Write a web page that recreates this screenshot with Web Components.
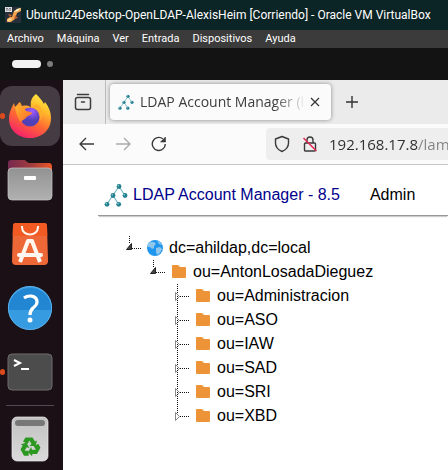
<!DOCTYPE html>
<html lang="es">
<head>
<meta charset="utf-8">
<meta name="viewport" content="width=device-width, initial-scale=1">
<title>Ubuntu24Desktop - Oracle VM VirtualBox</title>
<style>
html, body { margin: 0; height: 100%; }
body { background: #131313; overflow: hidden; font-family: "Open Sans", "Noto Sans", sans-serif; }
</style>
</head>
<body>
<vm-window></vm-window>
<script>
const define = (name, html, setup) => {
  const template = document.createElement('template');
  template.innerHTML = html;
  customElements.define(name, class extends HTMLElement {
    constructor() {
      super();
      this.attachShadow({ mode: 'open' }).append(template.content.cloneNode(true));
    }
    connectedCallback() { if (setup) setup(this, this.shadowRoot); }
  });
};

const lamLogo = size => `<svg width="${size}" height="${size}" viewBox="0 0 24 24" aria-hidden="true">
  <path d="M15 3.500L3 21M15 3.500L21 12.500M9 12.500L14.500 21" fill="none" stroke="#79b8c8" stroke-width="1.200"/>
  <g fill="#23808f"><circle cx="15" cy="3.500" r="2.400"/><circle cx="9" cy="12.500" r="2.400"/><circle cx="21" cy="12.500" r="2.400"/><circle cx="3" cy="21.300" r="2.400"/><circle cx="14.700" cy="21.300" r="2.400"/></g>
  <g fill="#8fd0d8"><circle cx="14.300" cy="2.800" r=".8"/><circle cx="8.300" cy="11.800" r=".8"/><circle cx="20.300" cy="11.800" r=".8"/><circle cx="2.300" cy="20.600" r=".8"/><circle cx="14" cy="20.600" r=".8"/></g>
</svg>`;

define('vm-titlebar', `<style>
:host { display: flex; align-items: center; gap: 5px; height: 30px; flex: none; padding-left: 5px; background: #0b2425; color: #fff; font: 12px Roboto, "Noto Sans", sans-serif; white-space: nowrap; overflow: hidden; }
svg { flex: none; }
</style>
<svg width="16" height="16" viewBox="0 0 16 16" aria-hidden="true">
  <rect width="16" height="16" fill="#27303a"/>
  <path d="M2 12L5 10L7 10L9 4L12 2L16 1V4L12 6L10 12L6 15L2 15Z" fill="#f4a451"/>
  <path d="M9 5L12 2L16 1L13 4Z" fill="#fff0c4"/><path d="M2 13L5 11L7 12L4 15Z" fill="#ffd690"/>
  <path d="M3 7L7 8L5 10ZM10 8L13 11L9 12Z" fill="#c95f2c"/>
  <rect width="7" height="5" fill="#ddd"/><path d="M1 1.500H3M4 1.500H6M1 3H6" stroke="#667" stroke-width=".8"/>
</svg>
<span><slot></slot></span>`);

define('vm-menubar', `<style>
:host { display: flex; align-items: center; gap: 13px; height: 18px; flex: none; padding-left: 7px; background: #3b3b3b; }
::slotted(button) { border: 0; margin: 0; padding: 0; background: none; color: #fff; font: 11px/18px Roboto, "Noto Sans", sans-serif; }
</style><slot></slot>`);

define('gnome-panel', `<style>
:host { display: flex; align-items: center; height: 32px; flex: none; padding-left: 12px; background: #131313; }
button { display: flex; align-items: center; gap: 6px; border: 0; padding: 0; background: none; }
.current { width: 29px; height: 8px; border-radius: 4px; background: #f2f2f2; }
.other { width: 6px; height: 6px; border-radius: 50%; background: #7d7d7d; }
</style><button aria-label="Actividades"><span class="current"></span><span class="other"></span></button>`);

define('dock-item', `<style>
:host { display: block; position: relative; }
button { display: grid; place-items: center; width: 60px; height: 60px; border: 0; padding: 0; border-radius: 12px; background: none; }
:host([active]) button { background: #453b42; }
:host([running])::before { content: ""; position: absolute; left: 0; top: 27px; width: 5px; height: 6px; border-radius: 3px; background: #dc4b1d; }
</style><button><slot></slot></button>`, (host, root) =>
  root.querySelector('button').setAttribute('aria-label', host.getAttribute('label')));

define('app-dock', `<style>
:host { display: flex; flex-direction: column; gap: 4px; flex: none; width: 63px; padding-top: 6px; box-sizing: border-box; background: #1c1017; overflow: hidden; }
hr { width: 48px; height: 1px; border: 0; margin: -1px 0 -1px 6px; background: #514950; flex: none; }
svg { display: block; }
</style>
<dock-item label="Firefox" active running>
<svg width="44" height="46" viewBox="0 0 44 46">
  <defs>
    <linearGradient id="f1" x1=".8" y1="0" x2=".3" y2="1"><stop offset="0" stop-color="#fff047"/><stop offset=".3" stop-color="#ffbb2c"/><stop offset=".6" stop-color="#ff6a32"/><stop offset="1" stop-color="#f5206c"/></linearGradient>
    <radialGradient id="f2" cx=".6" cy=".2"><stop offset="0" stop-color="#a45cff"/><stop offset="1" stop-color="#5140b8"/></radialGradient>
    <linearGradient id="f3" x1="0" y1="0" x2="1" y2="1"><stop offset="0" stop-color="#ffb52d"/><stop offset="1" stop-color="#ff642b"/></linearGradient>
  </defs>
  <path d="M28 1C31 4 34 7 36 11L37 9C41 14 43 19 43 25C43 37 34 45 22 45C10 45 1 37 1 26C1 19 4 14 6 10L7 14C9 12 10 10 12 9L14 13C18 12 21 13 23 14C22 8 24 4 28 1Z" fill="url(#f1)"/>
  <circle cx="22" cy="24" r="9.500" fill="url(#f2)"/>
  <path d="M7 14C12 11 16 14 18 18C21 19 24 19 24 20C23 23 19 22 18 25C16 27 13 27 13 30C10 25 8 21 7 14Z" fill="url(#f3)"/>
  <path d="M24 14C31 15 35 22 31 29C37 21 34 14 29 11Z" fill="#ffb02b"/>
</svg></dock-item>
<dock-item label="Archivos">
<svg width="46" height="42" viewBox="0 0 46 42">
  <defs><linearGradient id="d1"><stop stop-color="#76294f"/><stop offset=".55" stop-color="#a33d3c"/><stop offset="1" stop-color="#ef5725"/></linearGradient><linearGradient id="d2" x2="0" y2="1"><stop stop-color="#929292"/><stop offset="1" stop-color="#b1b1b1"/></linearGradient></defs>
  <path d="M1 13V4Q1 1 4 1H17Q19 1 20 3Q21 4 23 4H42Q45 4 45 8V14Z" fill="url(#d1)"/>
  <rect x="1" y="9" width="44" height="32" rx="4" fill="url(#d2)" stroke="#c7c7c7" stroke-width=".7"/>
  <rect x="17" y="17" width="12" height="4" rx="1" fill="#fff"/>
</svg></dock-item>
<dock-item label="Centro de aplicaciones">
<svg width="38" height="44" viewBox="0 0 38 44">
  <path d="M2 4Q2 1 5 1H33Q36 1 36 4L37 39Q37 43 33 43H5Q1 43 1 39Z" fill="#ee6837"/>
  <path d="M2 4Q2 1 5 1H33Q36 1 36 4L36.300 14H1.700Z" fill="#f15a22"/>
  <g fill="none" stroke="#fff6ef"><path d="M11 4V5C11 15 27 15 27 5V4" stroke-width="2"/><path d="M9 40L17 19H21L29 40" stroke-width="4" stroke-linejoin="round"/><path d="M8 33H30" stroke-width="4" stroke-linecap="round"/></g>
</svg></dock-item>
<dock-item label="Ayuda">
<svg width="46" height="46" viewBox="0 0 46 46">
  <circle cx="23" cy="23" r="22" fill="#369be1"/><path d="M1 25A22 22 0 1 1 45 25Z" fill="#2386d2"/><circle cx="23" cy="23" r="21.600" fill="none" stroke="#63b6ec" stroke-width=".8"/>
  <path d="M17 13C21 10 29 10 30 16C30.500 20 28 21 26 23C24 25 23 26 23 30" fill="none" stroke="#fff" stroke-width="3.200"/><circle cx="23" cy="35" r="2.500" fill="#fff"/>
</svg></dock-item>
<dock-item label="Terminal" running>
<svg width="46" height="38" viewBox="0 0 46 38">
  <rect x="1" y="1" width="44" height="36" rx="4" fill="#4b4c4b" stroke="#6c6c6c"/>
  <path d="M7 7L13 10L7 13" fill="none" stroke="#fff" stroke-width="2"/><path d="M14 16H22" stroke="#fff" stroke-width="2"/>
</svg></dock-item>
<hr>
<dock-item label="Papelera">
<svg width="38" height="46" viewBox="0 0 38 46">
  <defs><linearGradient id="t" x2="0" y2="1"><stop stop-color="#c1c1c1"/><stop offset="1" stop-color="#dadada"/></linearGradient></defs>
  <rect x="1" y="1" width="36" height="44" rx="5" fill="url(#t)" stroke="#eee" stroke-width=".7"/>
  <rect x="4" y="4" width="30" height="6" rx="3" fill="#777"/>
  <g fill="#2b9820">
    <path d="M14.500 21.500H21.500L24 25.500L26 24.500L24.500 30H18.500L20.500 28L18.500 24.500L16.500 28L12 25.500Z"/>
    <path d="M14.500 21.500H21.500L24 25.500L26 24.500L24.500 30H18.500L20.500 28L18.500 24.500L16.500 28L12 25.500Z" transform="rotate(120 19 31)"/>
    <path d="M14.500 21.500H21.500L24 25.500L26 24.500L24.500 30H18.500L20.500 28L18.500 24.500L16.500 28L12 25.500Z" transform="rotate(240 19 31)"/>
  </g>
</svg></dock-item>`);

define('browser-tabs', `<style>
:host { display: flex; align-items: center; height: 44px; flex: none; background: #ebebeb; color: #3d3d3d; }
button { display: grid; place-items: center; border: 0; padding: 0; background: none; color: inherit; flex: none; }
.view { width: 43px; height: 44px; padding-right: 3px; border-right: 1px solid #bcbcbc; box-sizing: border-box; }
.tab { display: flex; align-items: center; flex: 0 1 221px; min-width: 0; box-sizing: border-box; height: 36px; margin-left: 4px; padding: 0 7px 0 8px; border-radius: 4px; background: #fbfbfb; box-shadow: 0 0 4px #888; }
.title { flex: 1; min-width: 0; margin-left: 6px; font-size: 14px; line-height: 24px; white-space: nowrap; overflow: hidden; mask-image: linear-gradient(to left, transparent, #000 32px); }
.close { width: 18px; height: 24px; }
.new { width: 42px; height: 36px; }
</style>
<button class="view" aria-label="Ver pestañas"><svg width="18" height="18" viewBox="0 0 18 18" fill="none" stroke="#3d3d3d" stroke-width="1.500" stroke-linecap="round"><path d="M3.500 1.500H14.500"/><rect x="1.500" y="4.500" width="15" height="12" rx="2"/><path d="M7.500 9H10.500"/></svg></button>
<div class="tab" role="tab" aria-selected="true">${lamLogo(16)}<span class="title">LDAP Account Manager (l</span><button class="close" aria-label="Cerrar"><svg width="10" height="10" viewBox="0 0 10 10"><path d="M1 1L9 9M9 1L1 9" stroke="#333" stroke-width="1.200"/></svg></button></div>
<button class="new" aria-label="Nueva pestaña"><svg width="14" height="14" viewBox="0 0 14 14"><path d="M7 1V13M1 7H13" stroke="#333" stroke-width="1.400"/></svg></button>`);

define('browser-toolbar', `<style>
:host { display: flex; align-items: center; height: 40px; flex: none; padding-left: 6px; background: #fbfbfb; border-bottom: 1px solid #c4c4c4; }
button { display: grid; place-items: center; width: 36px; height: 32px; border: 0; padding: 0; background: none; flex: none; }
svg { fill: none; stroke: #3a3a3a; stroke-width: 1.4; stroke-linejoin: round; }
.field { display: flex; align-items: center; flex: 1; min-width: 0; height: 32px; margin-left: 89px; padding-left: 2px; border-radius: 4px 0 0 4px; background: #eee; }
.field button { width: 28px; }
input { flex: 1; min-width: 0; margin-left: 5px; padding: 0; border: 0; outline: 0; background: none; color: #303030; font: 15px/24px "Open Sans", "Noto Sans", sans-serif; mask-image: linear-gradient(to right, #000 89px, rgba(0,0,0,.55) 89px); }
</style>
<button aria-label="Atrás"><svg width="16" height="14" viewBox="0 0 16 14"><path d="M7 1L1 7L7 13M1 7H15"/></svg></button>
<button aria-label="Adelante" disabled><svg width="16" height="14" viewBox="0 0 16 14" style="stroke:#aaa"><path d="M9 1L15 7L9 13M15 7H1"/></svg></button>
<button aria-label="Recargar"><svg width="16" height="16" viewBox="0 0 16 16"><path d="M14.300 8A6.500 6.500 0 1 1 11.800 2.800"/><path d="M14.500 1V6H9.500Z" fill="#3a3a3a" stroke-width=".6"/></svg></button>
<div class="field">
<button aria-label="Protección"><svg width="16" height="18" viewBox="0 0 16 18"><path d="M8 1.500L14.500 4V8C14.500 12 11.500 15 8 16.500C4.500 15 1.500 12 1.500 8V4Z"/></svg></button>
<button aria-label="Conexión no segura"><svg width="16" height="18" viewBox="0 0 16 18"><rect x="2.500" y="8" width="11" height="8" rx="1"/><path d="M5 8V5A3 3 0 0 1 11 5V8"/><path d="M1.500 3L14.500 16" style="stroke:#e22850;stroke-width:1.500"/></svg></button>
<input type="text" aria-label="Dirección" value="192.168.17.8/lam">
</div>`);

define('lam-header', `<style>
:host { display: flex; align-items: center; gap: 30px; height: 50px; margin-left: 35px; padding-left: 6px; border-bottom: 1px solid #999; box-shadow: 0 2px 1px -1px #ccc; white-space: nowrap; }
a { display: flex; align-items: center; gap: 5px; color: #00008b; text-decoration: none; line-height: 24px; padding-top: 10px; }
span { padding-top: 10px; line-height: 24px; }
svg { flex: none; }
</style><a href="#">${lamLogo(24)}LDAP Account Manager - 8.5</a><span><slot></slot></span>`);

define('tree-node', `<style>
:host { display: block; }
.row { display: flex; align-items: center; height: 24px; white-space: nowrap; }
svg { flex: none; display: block; }
.line { fill: none; stroke: #111; stroke-dasharray: 1 1; }
a { display: flex; align-items: center; gap: 2px; color: #000; text-decoration: none; line-height: 24px; }
.children { margin-left: 24px; }
.open, .globe, .tail { display: none; }
:host([expanded]) .open, :host([kind=root]) .globe { display: inline; }
:host([expanded]) .closed, :host([kind=root]) .folder { display: none; }
:host(:not([expanded]):not([last])) .tail { display: inline; }
</style>
<div class="row">
<svg width="24" height="24" viewBox="0 0 24 24" aria-hidden="true">
  <g class="open"><path class="line" d="M10.500 0V7M13 12.500H23"/><path d="M12.500 7.500V13.500H7.500Z" fill="#444" stroke="#222"/></g>
  <g class="closed"><path class="line" d="M10.500 0V12M13 12.500H23"/><path d="M8.500 8.500V16.500L12.500 12.500Z" fill="#fff" fill-opacity=".8" stroke="#888"/></g>
  <path class="line tail" d="M10.500 12V24"/>
</svg>
<a href="#"><svg width="24" height="24" viewBox="0 0 24 24" aria-hidden="true">
  <g class="folder"><path d="M5 6Q5 5 6 5H11L13 7H18Q19 7 19 8V17Q19 18 18 18H6Q5 18 5 17Z" fill="#ed9438"/></g>
  <g class="globe"><circle cx="12" cy="12" r="8" fill="#2196ef"/><path d="M5 8L7 6H11L13 8L11 10V12L9 13L7 11L4.500 11ZM13 12L17 11L19 13L17 17L14 19L13 16ZM14 5L17 6L19 9L16 8Z" fill="#90c6e9"/></g>
</svg><span></span></a></div>
<div class="children" role="group"><slot></slot></div>`, (host, root) => {
  root.querySelector('span').textContent = host.getAttribute('label');
  host.setAttribute('role', 'treeitem');
});

define('lam-page', `<style>
:host { display: block; flex: 1; background: #fff; color: #000; font: 16px "Liberation Sans", Arial, sans-serif; overflow: hidden; }
.tree { margin: 20px 0 0 56px; }
</style>
<lam-header>Admin</lam-header>
<div class="tree" role="tree">
<tree-node kind="root" expanded label="dc=ahildap,dc=local">
  <tree-node expanded label="ou=AntonLosadaDieguez">
    <tree-node label="ou=Administracion"></tree-node>
    <tree-node label="ou=ASO"></tree-node>
    <tree-node label="ou=IAW"></tree-node>
    <tree-node label="ou=SAD"></tree-node>
    <tree-node label="ou=SRI"></tree-node>
    <tree-node label="ou=XBD" last></tree-node>
  </tree-node>
</tree-node>
</div>`);

define('browser-window', `<style>
:host { display: flex; flex-direction: column; flex: 1; min-width: 0; overflow: hidden; }
</style><browser-tabs></browser-tabs><browser-toolbar></browser-toolbar><lam-page></lam-page>`);

define('vm-window', `<style>
:host { display: flex; flex-direction: column; height: 100%; }
main { display: flex; flex: 1; min-height: 0; }
</style>
<vm-titlebar>Ubuntu24Desktop-OpenLDAP-AlexisHeim [Corriendo] - Oracle VM VirtualBox</vm-titlebar>
<vm-menubar><button>Archivo</button><button>Máquina</button><button>Ver</button><button>Entrada</button><button>Dispositivos</button><button>Ayuda</button></vm-menubar>
<gnome-panel></gnome-panel>
<main><app-dock></app-dock><browser-window></browser-window></main>`);
</script>
</body>
</html>
